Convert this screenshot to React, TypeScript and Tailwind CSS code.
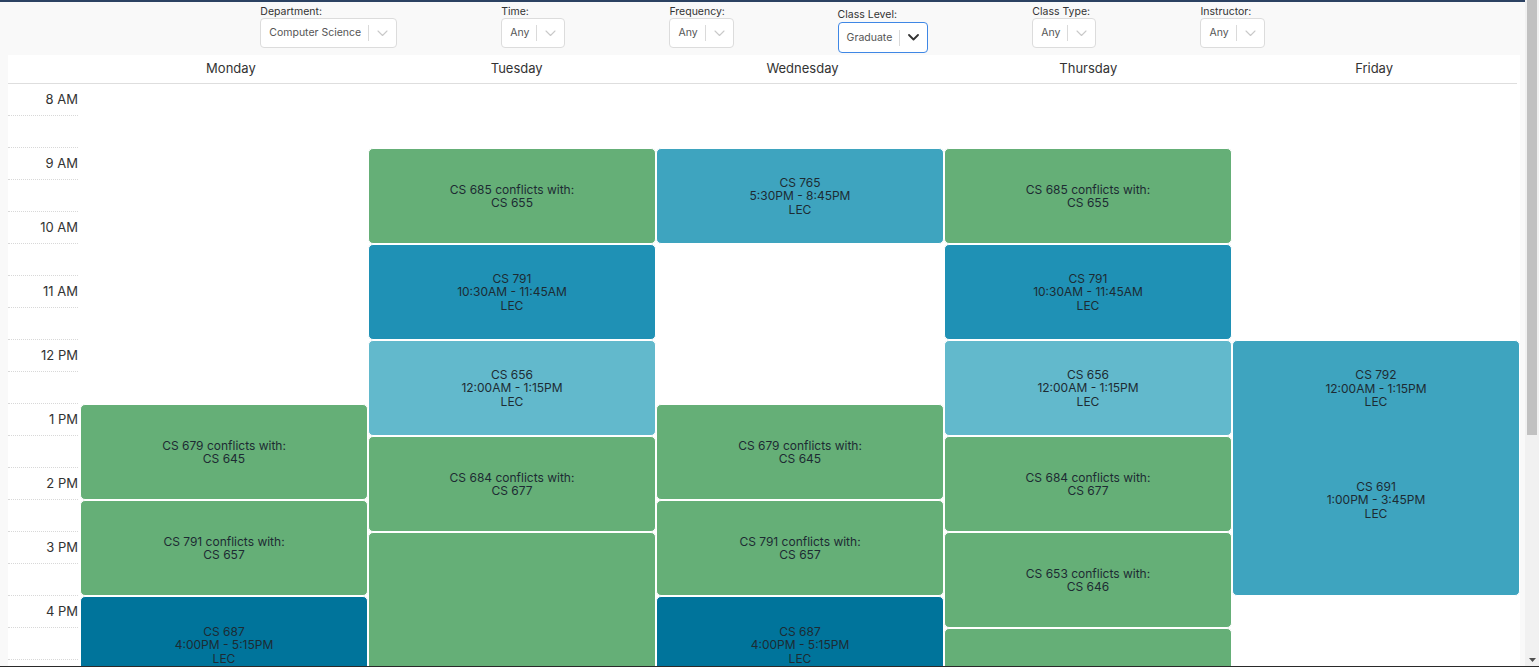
import React from "react";

const GREEN = "bg-[#65af77]";
const BLUE = "bg-[#1f91b5]";
const MID = "bg-[#3ea4bf]";
const LIGHT = "bg-[#62b9cc]";
const DARK = "bg-[#00749b]";

type Item = { h: number; color?: string; lines?: string[] };

const days = ["Monday", "Tuesday", "Wednesday", "Thursday", "Friday"];

const hours = [
  "8 AM", "9 AM", "10 AM", "11 AM", "12 PM", "1 PM", "2 PM",
  "3 PM", "4 PM", "5 PM", "6 PM", "7 PM", "8 PM", "9 PM",
];

const conflict = (a: string, b: string) => [`CS ${a} conflicts with:`, `CS ${b}`];
const lec = (c: string, t: string) => [`CS ${c}`, t, "LEC"];

const columns: Item[][] = [
  [
    { h: 320 },
    { h: 96, color: GREEN, lines: conflict("679", "645") },
    { h: 96, color: GREEN, lines: conflict("791", "657") },
    { h: 98, color: DARK, lines: lec("687", "4:00PM - 5:15PM") },
  ],
  [
    { h: 64 },
    { h: 96, color: GREEN, lines: conflict("685", "655") },
    { h: 96, color: BLUE, lines: lec("791", "10:30AM - 11:45AM") },
    { h: 96, color: LIGHT, lines: lec("656", "12:00AM - 1:15PM") },
    { h: 96, color: GREEN, lines: conflict("684", "677") },
    { h: 320, color: GREEN, lines: conflict("687", "653") },
  ],
  [
    { h: 64 },
    { h: 96, color: MID, lines: lec("765", "5:30PM - 8:45PM") },
    { h: 160 },
    { h: 96, color: GREEN, lines: conflict("679", "645") },
    { h: 96, color: GREEN, lines: conflict("791", "657") },
    { h: 98, color: DARK, lines: lec("687", "4:00PM - 5:15PM") },
  ],
  [
    { h: 64 },
    { h: 96, color: GREEN, lines: conflict("685", "655") },
    { h: 96, color: BLUE, lines: lec("791", "10:30AM - 11:45AM") },
    { h: 96, color: LIGHT, lines: lec("656", "12:00AM - 1:15PM") },
    { h: 96, color: GREEN, lines: conflict("684", "677") },
    { h: 96, color: GREEN, lines: conflict("653", "646") },
    { h: 192, color: GREEN, lines: conflict("687", "653") },
  ],
];

const Chevron = ({ dark }: { dark?: boolean }) => (
  <svg width="11" height="7" viewBox="0 0 11 7" fill="none">
    <path
      d="M1 1 L5.5 5.5 L10 1"
      stroke={dark ? "#333" : "#c9c9c9"}
      strokeWidth={dark ? 1.8 : 1.1}
      strokeLinecap="round"
      strokeLinejoin="round"
    />
  </svg>
);

const Filter = ({ label, value, focused }: { label: string; value: string; focused?: boolean }) => (
  <div className={focused ? "flex flex-col mt-[3px]" : "flex flex-col"}>
    <span className="text-[10.5px] leading-[12px] text-[#333]">{label}</span>
    <div
      className={
        focused
          ? "mt-[1px] flex h-[31px] items-center rounded-[4px] border-[1.5px] border-[#3f87e5] bg-white"
          : "flex h-[30px] items-center rounded-[4px] border border-[#dcdcdc] bg-white"
      }
    >
      <span className="pl-2 pr-[7px] text-[10.5px] text-[#555]">{value}</span>
      <span className="h-[16px] w-px bg-[#dadada]" />
      <span className="flex pl-[8px] pr-[8px]">
        <Chevron dark={focused} />
      </span>
    </div>
  </div>
);

const Lines = ({ lines }: { lines: string[] }) => (
  <>
    {lines.map((l) => (
      <span key={l} className="text-[12px] leading-[13.5px] text-[#1d2b33]">
        {l}
      </span>
    ))}
  </>
);

const Block = ({ color, lines }: { color: string; lines: string[] }) => (
  <div className={`flex h-full flex-col items-center justify-center rounded-[5px] border border-white ${color}`}>
    <Lines lines={lines} />
  </div>
);

const DayColumn = ({ items }: { items: Item[] }) => (
  <div className="flex flex-col">
    {items.map((it, i) => (
      <div key={i} style={{ height: it.h }}>
        {it.color && it.lines ? <Block color={it.color} lines={it.lines} /> : null}
      </div>
    ))}
  </div>
);

const FridayColumn = () => (
  <div className="flex flex-col">
    <div className="h-[256px]" />
    <div className="flex h-[256px] flex-col rounded-[5px] border border-white bg-[#3ea4bf]">
      <div className="flex h-[95px] flex-col items-center justify-center">
        <Lines lines={lec("792", "12:00AM - 1:15PM")} />
      </div>
      <div className="flex h-[128px] flex-col items-center justify-center">
        <Lines lines={lec("691", "1:00PM - 3:45PM")} />
      </div>
    </div>
  </div>
);

export default function App() {
  return (
    <div className="flex h-screen overflow-hidden font-['Inter','Noto_Sans',sans-serif] text-[#333]">
      <div className="flex-1 overflow-hidden border-t-2 border-[#2c4262] bg-[#f9f9f9]">
        {/* filters */}
        <div className="flex h-[53px] justify-center gap-[104px] pt-[4px]">
          <Filter label="Department:" value="Computer Science" />
          <Filter label="Time:" value="Any" />
          <Filter label="Frequency:" value="Any" />
          <Filter label="Class Level:" value="Graduate" focused />
          <Filter label="Class Type:" value="Any" />
          <Filter label="Instructor:" value="Any" />
        </div>

        <div className="mx-[5px] ml-2 bg-white pb-6">
          {/* day header */}
          <div className="mr-[3px] flex h-[29px] border-b border-[#dedede] pl-[80px]">
            {days.map((d) => (
              <div key={d} className="flex flex-1 items-center justify-center text-[13px] text-[#333]">
                {d}
              </div>
            ))}
          </div>

          {/* body */}
          <div className="flex">
            <div className="w-[72px] pr-[2px]">
              {hours.map((h) => (
                <React.Fragment key={h}>
                  <div className="flex h-[32px] items-center justify-end border-b border-dotted border-[#d8d8d8] text-[13px] text-[#333]">
                    {h}
                  </div>
                  <div className="h-[32px] border-b border-dotted border-[#d8d8d8]" />
                </React.Fragment>
              ))}
            </div>
            <div className="grid flex-1 grid-cols-5">
              {columns.map((c, i) => (
                <DayColumn key={i} items={c} />
              ))}
              <FridayColumn />
            </div>
          </div>
        </div>
      </div>

      {/* page scrollbar */}
      <div className="flex w-[14px] flex-col bg-[#f1f1f1] px-[2px]">
        <div className="h-[435px] bg-[#c1c1c1]" />
        <div className="flex-1" />
        <div className="flex h-[14px] items-center justify-center">
          <svg width="7" height="4" viewBox="0 0 7 4">
            <path d="M0 0 L7 0 L3.5 4 Z" fill="#505050" />
          </svg>
        </div>
      </div>
      <div className="fixed bottom-0 left-0 right-0 h-px bg-[#2a2a2a]" />
    </div>
  );
}
